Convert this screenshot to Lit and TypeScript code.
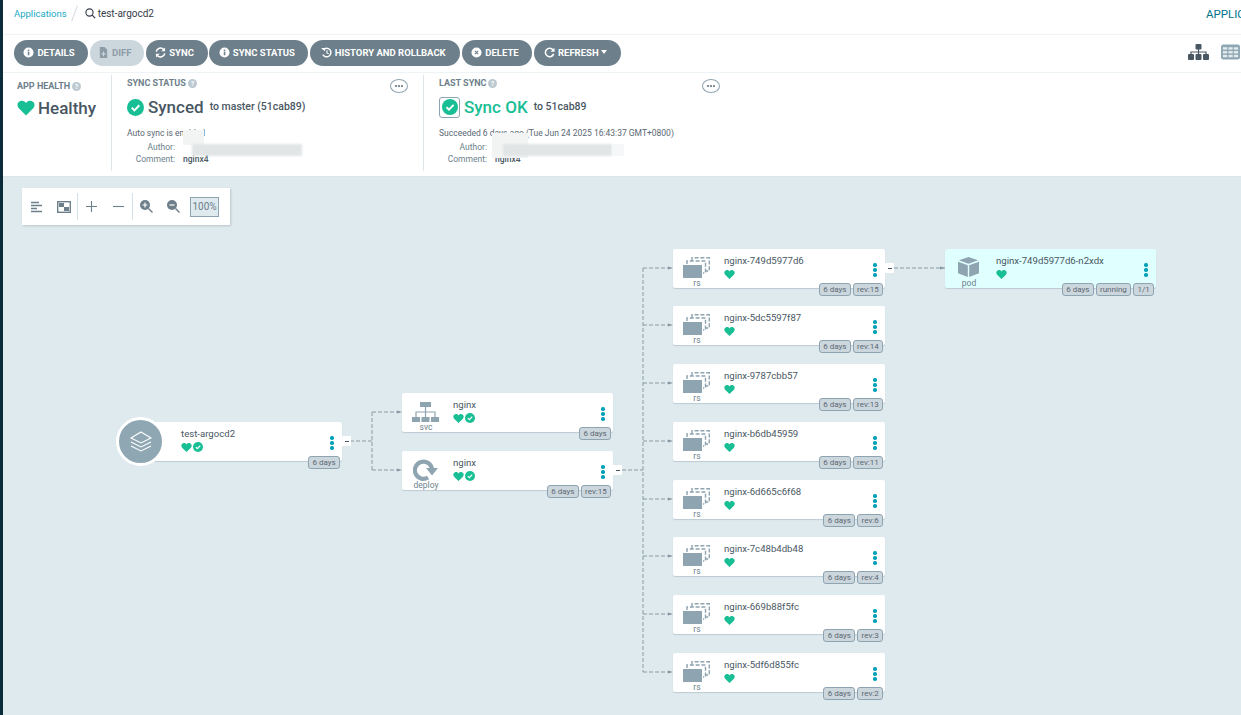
import { LitElement, html, css, svg } from "lit";
import { customElement } from "lit/decorators.js";

const HEART = "M8 14.6 1.6 8.2C-.4 6 .2 2.6 3 1.7c1.900-.6 3.800.1 5 1.800 1.200-1.700 3.100-2.400 5-1.800 2.800.9 3.400 4.300 1.400 6.500Z";
const heart = (s: number) => html`<svg class="ic" width=${s} height=${s} viewBox="0 0 16 16"><path fill="#18be94" d=${HEART}/></svg>`;
const check = (s: number) => html`<svg class="ic" width=${s} height=${s} viewBox="0 0 16 16"><circle cx="8" cy="8" r="8" fill="#18be94"/><path d="M4.500 8.300 7 10.700l4.600-4.800" fill="none" stroke="#fff" stroke-width="1.900"/></svg>`;
const help = () => html`<svg class="ic" width="9" height="9" viewBox="0 0 10 10"><circle cx="5" cy="5" r="5" fill="#bcc9d1"/><text x="5" y="7.600" text-anchor="middle" font-size="7" fill="#fff" font-weight="700">?</text></svg>`;

const btnIcons: Record<string, any> = {
  info: svg`<circle cx="6" cy="6" r="5.500" fill="#fff"/><rect x="5.200" y="5" width="1.700" height="4" fill="#6d7f8b"/><rect x="5.200" y="2.800" width="1.700" height="1.500" fill="#6d7f8b"/>`,
  file: svg`<path d="M2 0h5l3 3v9H2Z" fill="#8c9ba6"/><path d="M6 5v5M3.800 7.500h4.400" stroke="#ccd6dd" stroke-width="1.200"/>`,
  sync: svg`<path d="M1.300 5A4.800 4.800 0 0 1 9.500 2.700" fill="none" stroke="#fff" stroke-width="1.700"/><path d="M11 .5v4.200H6.800Z" fill="#fff"/><path d="M10.700 7A4.800 4.800 0 0 1 2.500 9.300" fill="none" stroke="#fff" stroke-width="1.700"/><path d="M1 11.500V7.300h4.200Z" fill="#fff"/>`,
  history: svg`<path d="M2.500 3A4.700 4.700 0 1 1 2 8.300" fill="none" stroke="#fff" stroke-width="1.600"/><path d="M0 1h4.500v3.500Z" fill="#fff"/><path d="M6.500 3.500v3l2 1" fill="none" stroke="#fff" stroke-width="1.200"/>`,
  del: svg`<circle cx="6" cy="6" r="5.500" fill="#fff"/><path d="m4.200 4.200 3.600 3.600m0-3.600L4.200 7.800" stroke="#6d7f8b" stroke-width="1.200"/>`,
  redo: svg`<path d="M9.800 3.200A4.600 4.600 0 1 0 10.500 7.500" fill="none" stroke="#fff" stroke-width="1.700"/><path d="M11.500.8v4.400H7.100Z" fill="#fff"/>`,
};

const buttons = [
  { label: "DETAILS", icon: "info" },
  { label: "DIFF", icon: "file", off: true },
  { label: "SYNC", icon: "sync" },
  { label: "SYNC STATUS", icon: "info" },
  { label: "HISTORY AND ROLLBACK", icon: "history" },
  { label: "DELETE", icon: "del" },
  { label: "REFRESH", icon: "redo", caret: true },
];

const rsIcon = svg`<g fill="none" stroke="#8fa4b1" stroke-width="1.400" stroke-dasharray="4 1.800"><path d="M9 4V.8h17.300V14H22"/><path d="M4 7V4h18.500v12H20"/></g><rect x="0" y="8" width="19" height="13" fill="#8fa4b1"/>`;
const svcIcon = svg`<g fill="#8fa4b1"><rect x="8" y="0" width="11" height="5"/><rect x="0" y="15" width="8" height="5"/><rect x="9.500" y="15" width="8" height="5"/><rect x="19" y="15" width="8" height="5"/></g><path d="M13.500 5v10M4 15v-5h19v5" fill="none" stroke="#8fa4b1" stroke-width="1.200"/>`;
const deployIcon = svg`<path d="M15 18.500A8.600 8.600 0 1 1 19 10" fill="none" stroke="#8fa4b1" stroke-width="4.200"/><path d="M13 9h12l-6 7.500Z" fill="#8fa4b1"/>`;
const podIcon = svg`<path d="M10.500 0 20 3.300 10.500 6.800 1 3.300Z" fill="#8fa4b1"/><path d="M0 4.800 9.800 8.300V20L0 16.300Z" fill="#8fa4b1"/><path d="M21 4.800 11.200 8.300V20L21 16.300Z" fill="#8fa4b1"/>`;

interface NodeD { x: number; y: number; name: string; kind: string; tags: string[]; sync?: boolean; pod?: boolean; }

const rsData: [number, string, string][] = [
  [249, "nginx-749d5977d6", "rev:15"],
  [306, "nginx-5dc5597f87", "rev:14"],
  [364, "nginx-9787cbb57", "rev:13"],
  [422, "nginx-b6db45959", "rev:11"],
  [480, "nginx-6d665c6f68", "rev:6"],
  [537, "nginx-7c48b4db48", "rev:4"],
  [595, "nginx-669b88f5fc", "rev:3"],
  [653, "nginx-5df6d855fc", "rev:2"],
];

const OFF = 177;
const nodes: NodeD[] = [
  { x: 402, y: 393, name: "nginx", kind: "svc", tags: ["6 days"], sync: true },
  { x: 402, y: 451, name: "nginx", kind: "deploy", tags: ["6 days", "rev:15"], sync: true },
  ...rsData.map(([y, name, rev]) => ({ x: 673, y, name, kind: "rs", tags: ["6 days", rev] })),
  { x: 945, y: 249, name: "nginx-749d5977d6-n2xdx", kind: "pod", tags: ["6 days", "running", "1/1"], pod: true },
];

const edgeSegs: string[] = [
  "M350 441H372M372 412V470M372 412H402M372 470H402",
  "M622 470H643M643 268V672",
  ...rsData.map(([y]) => `M643 ${y + 19}H673`),
  "M894 268H945",
];
const arrows = [412, 470].map((y) => [402, y]).concat(rsData.map(([y]) => [673, y + 19])).concat([[945, 268]]);

const icons: Record<string, [any, number, number, number, number]> = {
  rs: [rsIcon, 27, 21, 10, 8],
  svc: [svcIcon, 27, 20, 10, 9],
  deploy: [deployIcon, 25, 22, 11, 8],
  pod: [podIcon, 21, 20, 13, 8],
};

@customElement("app-root")
export class AppRoot extends LitElement {
  static styles = css`
    :host { display: block; width: 1241px; height: 715px; overflow: hidden; font-family: Roboto, "Liberation Sans", sans-serif; color: #495763; background: #fff; position: relative; }
    .shell { display: flex; height: 715px; }
    .rail { width: 3px; background: #0c2b3a; flex: none; }
    .main { flex: 1; display: flex; flex-direction: column; min-width: 0; overflow: hidden; }
    .top { height: 34px; flex: none; box-sizing: content-box; display: flex; align-items: center; padding-left: 11px; border-bottom: 1px solid #eef3f5; font-size: 9.5px; white-space: nowrap; }
    .crumbs { display: flex; align-items: center; margin-top: -7px; }
    .crumb { color: #1aa9c4; }
    .slash { width: 1px; height: 17px; background: #d5dde2; transform: rotate(20deg); margin: 0 10px 0 7px; }
    .title { color: #363c4a; display: flex; align-items: center; gap: 2px; font-size: 10px; }
    .apps { position: absolute; left: 1206px; top: 7px; color: #00728c; font-size: 11.500px; white-space: nowrap; }
    .bar { height: 38px; flex: none; box-sizing: border-box; padding: 5px 11px 0; display: flex; gap: 1.800px; border-bottom: 1px solid #eef3f5; position: relative; }
    .btn { height: 26px; box-sizing: border-box; padding: 0 4px 2px 0; border-radius: 13px; background: #6d7f8b; color: #fff; font-size: 9.500px; font-weight: 700; display: flex; align-items: center; justify-content: center; gap: 3px; }
    .btn.off { background: #ccd6dd; color: #8c9ba6; }
    .caret { width: 0; height: 0; border-left: 3.500px solid transparent; border-right: 3.500px solid transparent; border-top: 4px solid #fff; margin-left: -1px; }
    .views { position: absolute; right: 1px; top: 9px; display: flex; gap: 12px; align-items: center; }
    .status { height: 104px; flex: none; display: flex; box-sizing: border-box; border-bottom: 1px solid #dbe4e9; position: relative; }
    .panel { box-sizing: border-box; position: relative; }
    .p1 { width: 108px; padding-left: 14px; padding-top: 8px; }
    .p2 { width: 312px; padding-left: 15px; border-left: 1px solid #dfe6ea; margin-top: 2px; height: 96px; padding-top: 3px; }
    .p3 { width: 300px; padding-left: 15px; border-left: 1px solid #dfe6ea; margin-top: 2px; height: 96px; padding-top: 3px; }
    .head { font-size: 9px; font-weight: 700; color: #6d7f8b; display: flex; align-items: center; gap: 2px; height: 10px; }
    .big { display: flex; align-items: center; font-size: 17px; color: #495763; gap: 4px; font-weight: 500; margin-top: 6px; height: 26px; }
    .p1 .big { margin-top: 5px; height: 24px; gap: 3px; }
    .big small { font-size: 10.500px; margin-left: 2px; font-weight: 500; position: relative; top: -1px; }
    .ok { color: #18be94; }
    .okbox { border: 1px solid #8fa4b1; border-radius: 3px; width: 21px; height: 21px; box-sizing: border-box; display: flex; align-items: center; justify-content: center; }
    .line { font-size: 8.500px; color: #5a6873; margin-top: 7px; height: 12px; line-height: 12px; white-space: nowrap; }
    .kv { display: grid; grid-template-columns: 48px auto; column-gap: 8px; font-size: 8.500px; line-height: 12px; margin-top: 2px; color: #6d7f8b; }
    .kv span:nth-child(odd) { text-align: right; }
    .kv b { font-weight: 500; color: #495763; }
    .more { position: absolute; top: 4px; width: 18px; height: 14px; box-sizing: border-box; border: 1px solid #8fa4b1; border-radius: 50%; display: flex; align-items: center; justify-content: center; gap: 1px; }
    .more i { width: 2px; height: 2px; border-radius: 50%; background: #5a6873; }
    .blur { position: absolute; background: #e1e5e6; filter: blur(1px); }
    .blur.light { background: #f2f4f4; filter: blur(0.500px); }
    .blur.faint { background: #f6f7f9; filter: blur(0.500px); }
    .canvas { flex: 1; background: #deeaee; position: relative; overflow: hidden; }
    .edges { position: absolute; left: -3px; top: ${OFF * -1}px; width: 1241px; height: 715px; }
    .zoom { position: absolute; left: 19px; top: 11px; width: 208px; height: 37px; background: #fff; box-shadow: 1px 1px 2px #b7c3ca; display: flex; align-items: center; box-sizing: border-box; padding-left: 1px; }
    .zi { width: 27px; display: flex; align-items: center; justify-content: center; flex: none; }
    .sep { width: 1px; height: 27px; background: #d3e2e9; flex: none; }
    .pct { border: 1px solid #8fa4b1; background: #deeaee; font-size: 10px; color: #6d7f8b; width: 29px; height: 20px; line-height: 18px; text-align: center; box-sizing: border-box; margin-left: 3px; }
    .node { position: absolute; width: 211px; height: 39px; background: #fff; border-radius: 2px; box-shadow: 0 1px 1px #bccbd3; box-sizing: border-box; }
    .node.rs { width: 212px; }
    .node.pod { background: #e0ffff; }
    .kind { position: absolute; left: 0; width: 48px; text-align: center; top: 29px; font-size: 8.500px; line-height: 11px; color: #6d7f8b; }
    .kindi { position: absolute; }
    .name { position: absolute; left: 51px; top: 6px; font-size: 9.600px; line-height: 12px; color: #495763; white-space: nowrap; }
    .hs { position: absolute; left: 51px; top: 19.500px; display: flex; gap: 1px; }
    .dots { position: absolute; right: 8px; top: 14px; width: 4px; display: flex; flex-direction: column; gap: 1.500px; }
    .dots i { width: 3.500px; height: 3.500px; border-radius: 50%; background: #00a0b8; }
    .tags { position: absolute; right: 2px; top: 34px; display: flex; gap: 2px; }
    .tag { height: 13px; line-height: 11px; box-sizing: border-box; padding: 0 3.300px; background: #ccd6dd; border: 1px solid #8fa4b1; border-radius: 3px; font-size: 8px; color: #5a6873; white-space: nowrap; }
    .coll { position: absolute; width: 9px; height: 10px; background: #fff; display: flex; align-items: center; justify-content: center; }
    .coll i { width: 4px; height: 1px; background: #495763; }
    .app { position: absolute; left: 139px; top: 245px; width: 200px; height: 39px; background: #fff; border-radius: 2px; box-shadow: 0 1px 1px #bccbd3; }
    .circle { position: absolute; left: 113px; top: 240px; width: 49px; height: 49px; box-sizing: border-box; border-radius: 50%; background: #8fa7b3; border: 3px solid #fff; display: flex; align-items: center; justify-content: center; }
    .ic { display: block; flex: none; }
  `;

  private node(n: NodeD) {
    const [ic, w, h, ix, iy] = icons[n.kind];
    return html`<div class="node ${n.kind}" style="left:${n.x - 3}px;top:${n.y - OFF}px">
      <svg class="kindi" style="left:${ix}px;top:${iy}px" width=${w} height=${h} viewBox="0 0 ${w} ${h}">${ic}</svg>
      <div class="kind">${n.kind}</div>
      <div class="name">${n.name}</div>
      <div class="hs">${heart(11)}${n.sync ? check(10) : ""}</div>
      <div class="dots"><i></i><i></i><i></i></div>
      <div class="tags">${n.tags.map((t) => html`<span class="tag">${t}</span>`)}</div>
    </div>`;
  }

  render() {
    const widths = [74, 54, 62, 99, 150, 70, 87];
    return html`<div class="shell">
      <div class="rail"></div>
      <div class="main">
        <div class="top">
          <div class="crumbs">
            <span class="crumb">Applications</span><span class="slash"></span>
            <span class="title"><svg class="ic" width="11" height="11" viewBox="0 0 11 11"><circle cx="4.500" cy="4.500" r="3.600" fill="none" stroke="#363c4a" stroke-width="1.100"/><path d="m7.200 7.200 3 3" stroke="#363c4a" stroke-width="1.200"/></svg>test-argocd2</span>
          </div>
        </div>
        <div class="apps">APPLICATIONS</div>
        <div class="bar">
          ${buttons.map((b, i) => html`<div class="btn ${b.off ? "off" : ""}" style="width:${widths[i]}px">
            <svg class="ic" width="11" height="11" viewBox="0 0 12 12">${btnIcons[b.icon]}</svg>${b.label}${b.caret ? html`<span class="caret"></span>` : ""}
          </div>`)}
          <div class="views">
            <svg class="ic" width="21" height="16" viewBox="0 0 21 16"><g fill="#495763"><rect x="7.500" y="0" width="6" height="5.500" rx="1"/><rect x="0" y="10" width="6" height="6" rx="1"/><rect x="7.500" y="10" width="6" height="6" rx="1"/><rect x="15" y="10" width="6" height="6" rx="1"/></g><path d="M10.500 5v6M3 11V8h15v3" fill="none" stroke="#495763" stroke-width="1.200"/></svg>
            <svg class="ic" width="19" height="16" viewBox="0 0 20 16"><rect width="20" height="16" rx="2.500" fill="#8fa7b3"/><g fill="#e4ebee"><rect x="2" y="3" width="4.500" height="2.500"/><rect x="7.800" y="3" width="4.500" height="2.500"/><rect x="13.500" y="3" width="4.500" height="2.500"/><rect x="2" y="7" width="4.500" height="2.500"/><rect x="7.800" y="7" width="4.500" height="2.500"/><rect x="13.500" y="7" width="4.500" height="2.500"/><rect x="2" y="11" width="4.500" height="2.500"/><rect x="7.800" y="11" width="4.500" height="2.500"/><rect x="13.500" y="11" width="4.500" height="2.500"/></g></svg>
          </div>
        </div>
        <div class="status">
          <div class="panel p1">
            <div class="head">APP HEALTH ${help()}</div>
            <div class="big">${heart(18)}<span>Healthy</span></div>
          </div>
          <div class="panel p2">
            <div class="head">SYNC STATUS ${help()}</div>
            <div class="big">${check(17)}<span>Synced</span><small>to master (51cab89)</small></div>
            <div class="line">Auto sync is enabled</div>
            <div class="kv"><span>Author:</span><span></span><span>Comment:</span><b>nginx4</b></div>
            <div class="more" style="left:278px"><i></i><i></i><i></i></div>
          </div>
          <div class="panel p3">
            <div class="head">LAST SYNC ${help()}</div>
            <div class="big"><span class="okbox">${check(16)}</span><span class="ok">Sync OK</span><small>to 51cab89</small></div>
            <div class="line">Succeeded 6 days ago (Tue Jun 24 2025 16:43:37 GMT+0800)</div>
            <div class="kv"><span>Author:</span><span></span><span>Comment:</span><b>nginx4</b></div>
            <div class="more" style="left:278px"><i></i><i></i><i></i></div>
          </div>
          <div class="blur light" style="left:180px;top:57px;width:21px;height:15px"></div>
          <div class="blur" style="left:189px;top:71px;width:110px;height:12px"></div>
          <div class="blur light" style="left:489px;top:60px;width:36px;height:25px"></div>
          <div class="blur" style="left:500px;top:71px;width:109px;height:12px"></div>
          <div class="blur faint" style="left:609px;top:71px;width:12px;height:12px"></div>
        </div>
        <div class="canvas">
          <svg class="edges" viewBox="0 0 1241 715">
            <path d=${edgeSegs.join("")} fill="none" stroke="#8a9aa4" stroke-width="1" stroke-dasharray="4 2"/>
            ${arrows.map(([x, y]) => svg`<path d="M${x} ${y}l-5 -1.500v3Z" fill="#8a9aa4"/>`)}
          </svg>
          <div class="zoom">
            <div class="zi"><svg width="12" height="12" viewBox="0 0 12 12"><path d="M0 1.500h8M0 4.500h11M0 7.500h6M0 10.500h11" stroke="#6d7f8b" stroke-width="1.300"/></svg></div>
            <div class="zi"><svg width="14" height="12" viewBox="0 0 14 12"><rect x=".7" y=".7" width="12.600" height="10.600" fill="none" stroke="#6d7f8b" stroke-width="1.400"/><rect x="2" y="2" width="5" height="4" fill="#6d7f8b"/><rect x="7" y="6" width="5" height="4" fill="#6d7f8b"/></svg></div>
            <div class="sep"></div>
            <div class="zi"><svg width="11" height="11" viewBox="0 0 11 11"><path d="M5.500 0v11M0 5.500h11" stroke="#6d7f8b" stroke-width="1.100"/></svg></div>
            <div class="zi"><svg width="11" height="11" viewBox="0 0 11 11"><path d="M0 5.500h11" stroke="#6d7f8b" stroke-width="1.100"/></svg></div>
            <div class="sep"></div>
            <div class="zi"><svg width="13" height="13" viewBox="0 0 13 13"><circle cx="5" cy="5" r="5" fill="#6d7f8b"/><path d="M5 2.500v5M2.500 5h5" stroke="#fff" stroke-width="1.200"/><path d="m8.500 8.500 4 4" stroke="#6d7f8b" stroke-width="1.400"/></svg></div>
            <div class="zi"><svg width="13" height="13" viewBox="0 0 13 13"><circle cx="5" cy="5" r="5" fill="#6d7f8b"/><path d="M2.500 5h5" stroke="#fff" stroke-width="1.200"/><path d="m8.500 8.500 4 4" stroke="#6d7f8b" stroke-width="1.400"/></svg></div>
            <div class="pct">100%</div>
          </div>
          <div class="app">
            <div class="name" style="left:39px">test-argocd2</div>
            <div class="hs" style="left:39px">${heart(11)}${check(10)}</div>
            <div class="dots"><i></i><i></i><i></i></div>
            <div class="tags"><span class="tag">6 days</span></div>
          </div>
          <div class="circle"><svg width="24" height="24" viewBox="0 0 24 24" fill="none" stroke="#fff" stroke-width="1.100"><path d="M12 2 22 8 12 13 2 8Z"/><path d="M2 12l10 5 10-5M2 16l10 5 10-5"/></svg></div>
          ${nodes.map((n) => this.node(n))}
          <div class="coll" style="left:339px;top:259px"><i></i></div>
          <div class="coll" style="left:610px;top:288px"><i></i></div>
          <div class="coll" style="left:882px;top:86px"><i></i></div>
        </div>
      </div>
    </div>`;
  }
}
